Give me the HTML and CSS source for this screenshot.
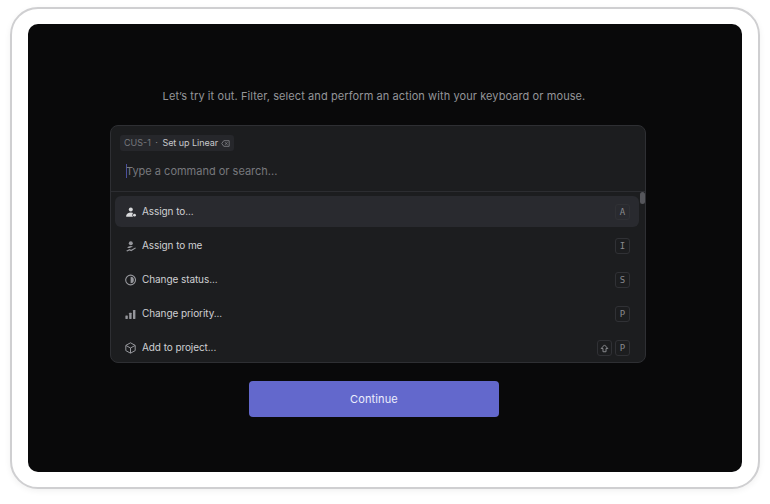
FILE: index.html
```html
<!DOCTYPE html>
<html lang="en">
<head>
<meta charset="utf-8">
<title>Command menu</title>
<link rel="stylesheet" href="styles.css">
</head>
<body>
<div class="frame">
  <main class="stage">
    <p class="intro">Let’s try it out. Filter, select and perform an action with your keyboard or mouse.</p>
    <section class="palette">
      <div class="head">
        <div class="chip">
          <span class="chip-id">CUS-1</span><span class="chip-dot">·</span><span class="chip-title">Set up Linear</span>
          <svg class="chip-x" viewBox="0 0 10 8" width="9" height="7" fill="none" stroke="currentColor" stroke-width="1"><path d="M3 .8h6.200v6.400H3L.7 4z"/><path d="M4.600 2.600l2.600 2.800M7.200 2.600L4.600 5.400"/></svg>
        </div>
        <div class="search"><span class="caret"></span><span class="placeholder">Type a command or search...</span></div>
      </div>
      <div class="list">
        <div class="row active">
          <svg class="ico bright" viewBox="0 0 12 12" width="12" height="12" fill="currentColor"><circle cx="5.800" cy="3.600" r="2"/><path d="M1 10.300C1.300 8.300 3.200 6.600 6 6.600c.9 0 1.700.2 2.300.5-.6.400-1 1-1 1.800 0 .7.300 1.300.8 1.800H1.800c-.5 0-.9-.2-.8-.4z"/><circle cx="9.500" cy="9.200" r="1.400"/></svg>
          <span class="label">Assign to...</span>
          <span class="keys"><kbd>A</kbd></span>
        </div>
        <div class="row">
          <svg class="ico" viewBox="0 0 12 12" width="12" height="12" fill="currentColor"><circle cx="5.800" cy="3.200" r="2"/><path d="M2.200 8C2.700 6.800 4.100 6 5.800 6c.9 0 1.600.2 2.200.5L4.700 8z"/><path d="M1.200 10.800l3.300-1.700 1.600.7 4.200-2.400.6.900-4.700 2.900-1.600-.6-2.500 1z"/></svg>
          <span class="label">Assign to me</span>
          <span class="keys"><kbd>I</kbd></span>
        </div>
        <div class="row">
          <svg class="ico" viewBox="0 0 12 12" width="12" height="12" fill="none" stroke="currentColor" stroke-width="1.100"><circle cx="5.600" cy="6" r="4.900"/><path d="M5.600 2.800a3.200 3.200 0 0 1 0 6.400z" fill="currentColor" stroke="none"/></svg>
          <span class="label">Change status...</span>
          <span class="keys"><kbd>S</kbd></span>
        </div>
        <div class="row">
          <svg class="ico" viewBox="0 0 12 12" width="12" height="12" fill="currentColor"><rect x=".4" y="7.500" width="2.400" height="3.500" rx=".4"/><rect x="4.200" y="4.800" width="2.400" height="6.200" rx=".4"/><rect x="8" y="2" width="2.400" height="9" rx=".4"/></svg>
          <span class="label">Change priority...</span>
          <span class="keys"><kbd>P</kbd></span>
        </div>
        <div class="row">
          <svg class="ico" viewBox="0 0 12 12" width="12" height="12" fill="none" stroke="currentColor" stroke-width="1" stroke-linejoin="round"><path d="M5.500.8l4.700 2.600v5.200l-4.700 2.600L.8 8.600V3.400z"/><path d="M1 3.500L5.500 6 10 3.500M5.500 6v5"/></svg>
          <span class="label">Add to project...</span>
          <span class="keys">
            <kbd><svg viewBox="0 0 10 10" width="9" height="9" fill="none" stroke="currentColor" stroke-width="1.100" stroke-linejoin="round"><path d="M5 1l3.700 4H6.700v3.600H3.300V5H1.300z"/></svg></kbd>
            <kbd>P</kbd>
          </span>
        </div>
        <div class="thumb"></div>
      </div>
    </section>
    <button class="continue" type="button">Continue</button>
  </main>
</div>
</body>
</html>
```
FILE: styles.css
```css
* { box-sizing: border-box; }
html, body { margin: 0; height: 100%; background: #fff; overflow: hidden; }
body { padding: 7px 10px 0; font-family: Inter, "Liberation Sans", sans-serif; }

.frame {
  width: 750px;
  height: 482px;
  padding: 15px 16px;
  background: #fff;
  border: 2px solid #cfcfd1;
  border-radius: 28px;
  box-shadow: 0 2px 6px rgba(0, 0, 0, 0.06);
}

.stage {
  height: 448px;
  background: #09090a;
  border-radius: 10px;
  display: flex;
  flex-direction: column;
  align-items: center;
  padding: 64px 22px 0 0;
  will-change: opacity;
}

.intro {
  margin: 0;
  font-size: 11px;
  line-height: 16px;
  color: #949599;
  letter-spacing: 0.09px;
}

.palette {
  margin: 21px 0 0 8px;
  width: 536px;
  height: 238px;
  flex: none;
  background: #1c1d1f;
  border: 1px solid #2e2f33;
  border-radius: 8px;
  overflow: hidden;
}

.head {
  height: 66px;
  border-bottom: 1px solid #2c2d31;
  padding: 9px 10px 0 9px;
}

.chip {
  display: flex;
  width: fit-content;
  align-items: center;
  height: 16px;
  padding: 0 4px;
  background: #26272b;
  border-radius: 3px;
  font-size: 9px;
  line-height: 16px;
}
.chip-id { color: #77787d; }
.chip-dot { color: #8a8b90; margin: 0 4.500px; }
.chip-title { color: #c8c9cc; letter-spacing: -0.05px; }
.chip-x { color: #808186; margin-left: 3px; }

.search {
  display: flex;
  align-items: center;
  height: 16px;
  margin: 12px 0 0 6px;
}
.caret { width: 1px; height: 14px; margin-right: -1px; background: #4a4f9c; }
.placeholder { font-size: 11px; line-height: 16px; color: #77787d; }

.list {
  position: relative;
  padding: 4px 6px 0 4px;
}

.row {
  display: flex;
  align-items: center;
  height: 31px;
  margin-bottom: 3.200px;
  padding: 0 9px 0 10px;
  border-radius: 6px;
}
.row.active { background: #292a2f; }

.ico { flex: none; color: #96979c; }
.ico.bright { color: #d8d9dc; }

.label {
  flex: 1;
  margin: 0 0 2px 5px;
  font-size: 10px;
  line-height: 14px;
  letter-spacing: -0.08px;
  color: #cfd0d3;
}

.keys { display: flex; gap: 3px; }

kbd {
  display: flex;
  align-items: center;
  justify-content: center;
  width: 15px;
  height: 16px;
  border: 1px solid #303135;
  border-radius: 3px;
  font-family: "DejaVu Sans Mono", monospace;
  font-size: 9px;
  color: #88898d;
}

.thumb {
  position: absolute;
  top: 0;
  right: 0;
  width: 5px;
  height: 12px;
  border-radius: 3px;
  background: #55565b;
}

.continue {
  margin-top: 18px;
  flex: none;
  width: 250px;
  height: 36px;
  border: 0;
  border-radius: 4px;
  background: #6368cc;
  color: #eceefc;
  font-family: Inter, "Liberation Sans", sans-serif;
  font-size: 11px;
  font-weight: 400;
  letter-spacing: 0.12px;
}
```
